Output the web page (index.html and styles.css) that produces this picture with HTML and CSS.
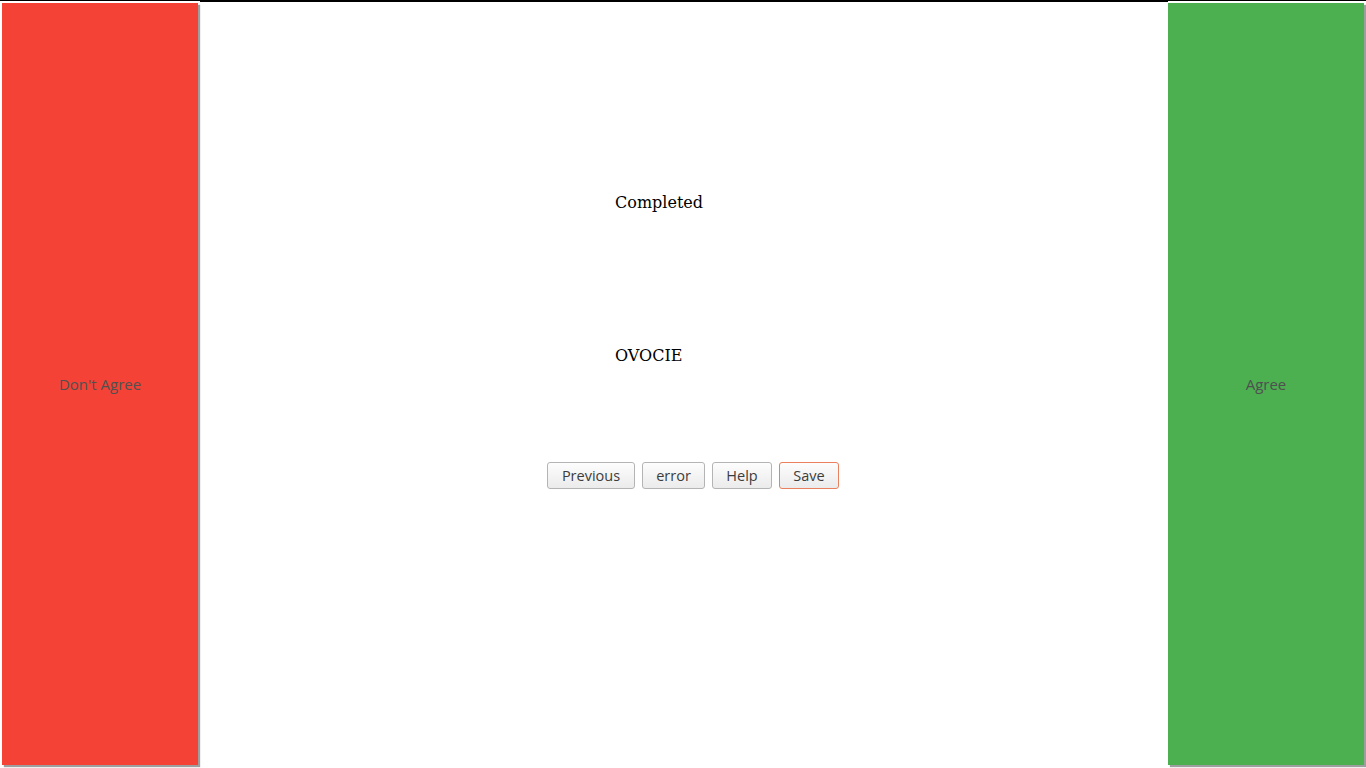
FILE: index.html
```html
<!DOCTYPE html>
<html>
<head>
<meta charset="utf-8">
<link rel="stylesheet" href="styles.css">
</head>
<body>
<div class="page">
  <div class="side side-no"><span class="side-label">Don't Agree</span></div>
  <div class="center">
    <div class="line line-status">Completed</div>
    <div class="line line-word">OVOCIE</div>
    <div class="buttons">
      <button class="btn btn-prev">Previous</button>
      <button class="btn btn-error">error</button>
      <button class="btn btn-help">Help</button>
      <button class="btn btn-save">Save</button>
    </div>
  </div>
  <div class="side side-yes"><span class="side-label">Agree</span></div>
</div>
</body>
</html>
```

FILE: styles.css
```css
html, body {
  margin: 0;
  padding: 0;
  background: #ffffff;
}
body {
  width: 1366px;
  height: 768px;
  overflow: hidden;
}
.page {
  display: flex;
  height: 768px;
  border-top: 1px solid #000;
  box-sizing: border-box;
}
.side {
  width: 196px;
  height: 762px;
  margin-top: 2px;
  box-shadow: 2px 2px 1px #9e9e9e;
  display: flex;
  align-items: center;
  justify-content: center;
  flex: none;
}
.side-no {
  background: #f44336;
  margin-left: 2px;
}
.side-yes {
  background: #4caf50;
  margin-right: 2px;
}
.side-label {
  font-family: "Open Sans", "DejaVu Sans", sans-serif;
  font-size: 15px;
  color: #505050;
}
.center {
  flex: 1;
  margin-left: 2px;
  border-top: 1px solid #000;
}
.line {
  font-family: "DejaVu Serif", serif;
  font-size: 16px;
  color: #000;
  padding-left: 415px;
  line-height: 19px;
}
.line-status {
  margin-top: 191px;
}
.line-word {
  margin-top: 134px;
}
.buttons {
  display: flex;
  gap: 7px;
  margin-top: 97px;
  padding-left: 347px;
}
.btn {
  height: 27px;
  box-sizing: border-box;
  border: 1px solid #b4b4b4;
  border-radius: 3px;
  background: linear-gradient(#fdfdfd, #ebebeb);
  font-family: "Open Sans", "DejaVu Sans", sans-serif;
  font-size: 14.5px;
  color: #3c3c3c;
  padding: 0;
  text-align: center;
}
.btn-prev { width: 88px; }
.btn-error { width: 63px; }
.btn-help { width: 60px; }
.btn-save {
  width: 60px;
  border-color: #e9805e;
}
```
